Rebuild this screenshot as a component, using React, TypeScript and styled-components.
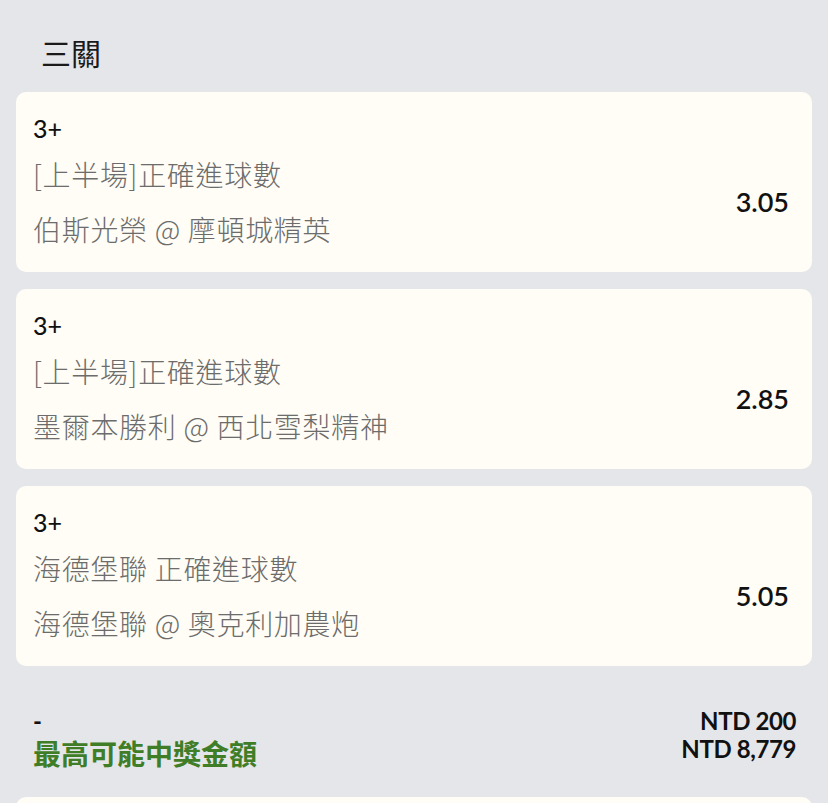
import React from 'react'
import styled, { createGlobalStyle } from 'styled-components'

const GlobalStyle = createGlobalStyle`
  html, body {
    margin: 0;
    padding: 0;
    background: #e5e6e9;
  }
  body {
    font-family: Lato, "Noto Sans CJK TC", sans-serif;
    color: #111;
  }
`

const Page = styled.div`
  height: 100vh;
  overflow: hidden;
  padding: 0 16px;
  box-sizing: border-box;
`

const Title = styled.h2`
  margin: 0;
  padding: 30px 0 18px 25px;
  font-family: "Noto Sans CJK TC", sans-serif;
  font-size: 30px;
  font-weight: 400;
  line-height: 44px;
  color: #1a1a1a;
`

const List = styled.div`
  display: flex;
  flex-direction: column;
  gap: 17px;
`

const Card = styled.div`
  background: #fffdf5;
  border-radius: 10px;
  padding: 20px 23px 23px 17px;
  box-sizing: border-box;
  height: 180px;
`

const Selection = styled.div`
  font-size: 25px;
  font-weight: 500;
  line-height: 32px;
  color: #111;
`

const Body = styled.div`
  display: flex;
  align-items: center;
  justify-content: space-between;
  margin-top: 10px;
`

const Lines = styled.div`
  display: flex;
  flex-direction: column;
  gap: 15px;
`

const Line = styled.div`
  font-family: "Noto Sans CJK TC", sans-serif;
  font-size: 28px;
  font-weight: 300;
  letter-spacing: 0.7px;
  line-height: 40px;
  color: #6c6c6c;
  white-space: nowrap;
`

const Odds = styled.div`
  font-size: 27px;
  font-weight: 600;
  color: #111;
`

const Summary = styled.div`
  display: flex;
  justify-content: space-between;
  padding: 41px 16px 26px 17px;
`

const Column = styled.div<{ $right?: boolean }>`
  display: flex;
  flex-direction: column;
  align-items: ${(p) => (p.$right ? 'flex-end' : 'flex-start')};
`

const Amount = styled.div`
  font-size: 24px;
  font-weight: 700;
  line-height: 28px;
  letter-spacing: -0.4px;
  color: #111;
`

const Payout = styled.div`
  font-family: "Noto Sans CJK TC", sans-serif;
  font-size: 28px;
  font-weight: 700;
  line-height: 36px;
  color: #3f7d27;
`

const NextCard = styled.div`
  background: #fffdf5;
  border-radius: 10px;
  height: 120px;
`

type Leg = {
  pick: string
  market: string
  match: string
  odds: string
}

const legs: Leg[] = [
  { pick: '3+', market: '[上半場]正確進球數', match: '伯斯光榮 @ 摩頓城精英', odds: '3.05' },
  { pick: '3+', market: '[上半場]正確進球數', match: '墨爾本勝利 @ 西北雪梨精神', odds: '2.85' },
  { pick: '3+', market: '海德堡聯 正確進球數', match: '海德堡聯 @ 奧克利加農炮', odds: '5.05' },
]

const LegCard = ({ leg }: { leg: Leg }) => (
  <Card>
    <Selection>{leg.pick}</Selection>
    <Body>
      <Lines>
        <Line>{leg.market}</Line>
        <Line>{leg.match}</Line>
      </Lines>
      <Odds>{leg.odds}</Odds>
    </Body>
  </Card>
)

const App = () => {
  return (
    <>
      <GlobalStyle />
      <Page>
        <Title>三關</Title>
        <List>
          {legs.map((leg, i) => (
            <LegCard key={i} leg={leg} />
          ))}
        </List>
        <Summary>
          <Column>
            <Amount>-</Amount>
            <Payout>最高可能中獎金額</Payout>
          </Column>
          <Column $right>
            <Amount>NTD 200</Amount>
            <Amount>NTD 8,779</Amount>
          </Column>
        </Summary>
        <NextCard />
      </Page>
    </>
  )
}

export default App
